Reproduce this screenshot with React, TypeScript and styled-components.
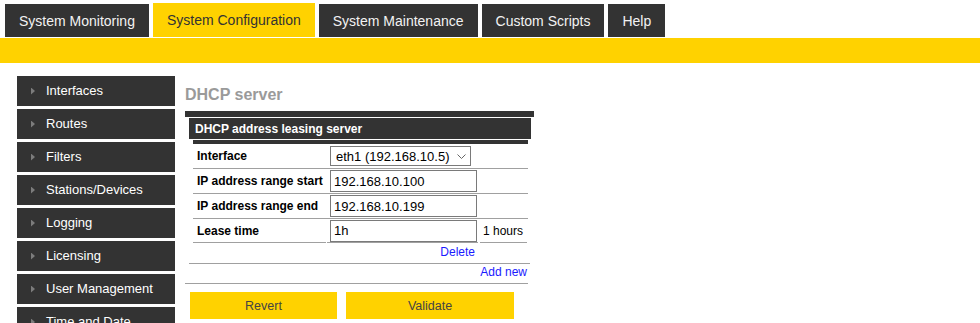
import React from "react";
import styled, { createGlobalStyle } from "styled-components";

const GlobalStyle = createGlobalStyle`
  body {
    margin: 0;
    background: #fff;
    font-family: "Liberation Sans", Arial, sans-serif;
  }
`;

const yellow = "#ffd200";
const dark = "#333333";

const TabBar = styled.nav`
  display: flex;
  align-items: flex-end;
  gap: 4px;
  padding: 3px 0 0 5px;
  height: 34px;
  margin-bottom: 1px;
`;

const Tab = styled.div<{ $active?: boolean }>`
  height: ${({ $active }) => ($active ? 34 : 33)}px;
  padding: 0 14px;
  display: flex;
  align-items: center;
  font-size: 14px;
  background: ${({ $active }) => ($active ? yellow : dark)};
  color: ${({ $active }) => ($active ? "#333" : "#f2f2f2")};
  cursor: pointer;
`;

const YellowBar = styled.div`
  height: 25px;
  background: ${yellow};
`;

const Main = styled.div`
  display: flex;
  align-items: flex-start;
`;

const Sidebar = styled.ul`
  list-style: none;
  margin: 13px 0 0 17px;
  padding: 0;
  width: 158px;
`;

const SideItem = styled.li`
  box-sizing: border-box;
  height: 30px;
  margin-bottom: 3px;
  background: ${dark};
  color: #fff;
  font-size: 13px;
  display: flex;
  align-items: center;
  padding: 0 0 2px 14px;

  &::before {
    content: "";
    width: 4px;
    height: 7px;
    background: #7c7c7c;
    clip-path: polygon(0 0, 100% 50%, 0 100%);
    margin: 2px 11px 0 0;
  }
`;

const Content = styled.section`
  margin: 23px 0 0 10px;
  display: flex;
  flex-direction: column;
`;

const Heading = styled.h2`
  margin: 0 0 7px;
  font-size: 16px;
  line-height: 18px;
  font-weight: bold;
  color: #9a9a9a;
`;

const Panel = styled.div`
  width: 349px;
  border-top: 6px solid ${dark};
  padding-top: 1px;
`;

const PanelHeader = styled.div`
  margin: 0 3px 0 4px;
  height: 21px;
  background: ${dark};
  color: #fff;
  font-size: 12px;
  font-weight: bold;
  display: flex;
  align-items: center;
  padding-left: 6px;
`;

const FormTable = styled.div`
  margin: 1px 6px 0 8px;
  border-top: 4px solid ${dark};
`;

const Row = styled.div<{ $split?: boolean }>`
  display: grid;
  grid-template-columns: 134px 153px 1fr;
  height: 24px;
  border-bottom: ${({ $split }) => ($split ? "none" : "1px solid #a0a0a0")};
  padding-bottom: ${({ $split }) => ($split ? "1px" : "0")};
`;

const Cell = styled.div<{ $split?: boolean; $gap?: number }>`
  display: flex;
  align-items: center;
  font-size: 12px;
  border-bottom: ${({ $split }) => ($split ? "1px solid #a0a0a0" : "none")};
  margin-right: ${({ $gap }) => $gap ?? 0}px;
`;

const Label = styled(Cell)`
  font-weight: bold;
  padding-left: 4px;
  color: #000;
`;

const InputCell = styled(Cell)`
  padding-left: 3px;
`;

const TextInput = styled.input`
  box-sizing: border-box;
  width: 147px;
  height: 22px;
  border: 1px solid #7a7a7a;
  padding: 0 3px;
  font-family: "Liberation Sans", Arial, sans-serif;
  font-size: 13px;
  color: #000;
  outline: none;
`;

const SelectWrap = styled.div`
  position: relative;
  width: 141px;
  height: 20px;
`;

const Select = styled.select`
  box-sizing: border-box;
  appearance: none;
  width: 100%;
  height: 100%;
  border: 1px solid #7a7a7a;
  border-radius: 0;
  background: #fff;
  padding: 0 0 0 5px;
  font-family: "Liberation Sans", Arial, sans-serif;
  font-size: 13px;
  color: #000;
`;

const Chevron = styled.svg`
  position: absolute;
  right: 5px;
  top: 8px;
  pointer-events: none;
`;

const Unit = styled(Cell)`
  padding-left: 3px;
  color: #000;
`;

const LinkRow = styled.div<{ $left: number; $right: number; $pad: number }>`
  box-sizing: border-box;
  margin: 0 ${({ $right }) => $right}px 0 ${({ $left }) => $left}px;
  height: 20px;
  border-bottom: 1px solid #a0a0a0;
  display: flex;
  align-items: flex-start;
  justify-content: flex-end;
  padding: 1px ${({ $pad }) => $pad}px 0 0;
  line-height: 15px;
`;

const Link = styled.a`
  font-size: 12px;
  color: #1a1aff;
  text-decoration: none;
  cursor: pointer;
`;

const Buttons = styled.div`
  display: flex;
  gap: 9px;
  margin: 8px 0 0 5px;
`;

const Button = styled.button<{ $width: number }>`
  width: ${({ $width }) => $width}px;
  height: 27px;
  border: none;
  background: ${yellow};
  color: #444;
  font-family: "Liberation Sans", Arial, sans-serif;
  font-size: 12.5px;
  cursor: pointer;
`;

const tabs = [
  "System Monitoring",
  "System Configuration",
  "System Maintenance",
  "Custom Scripts",
  "Help",
];

const menu = [
  "Interfaces",
  "Routes",
  "Filters",
  "Stations/Devices",
  "Logging",
  "Licensing",
  "User Management",
  "Time and Date",
];

export default function App() {
  return (
    <>
      <GlobalStyle />
      <TabBar>
        {tabs.map((t) => (
          <Tab key={t} $active={t === "System Configuration"}>
            {t}
          </Tab>
        ))}
      </TabBar>
      <YellowBar />
      <Main>
        <Sidebar>
          {menu.map((m) => (
            <SideItem key={m}>{m}</SideItem>
          ))}
        </Sidebar>
        <Content>
          <Heading>DHCP server</Heading>
          <Panel>
            <PanelHeader>DHCP address leasing server</PanelHeader>
            <FormTable>
              <Row>
                <Label>Interface</Label>
                <InputCell>
                  <SelectWrap>
                    <Select defaultValue="eth1">
                      <option value="eth1">eth1 (192.168.10.5)</option>
                    </Select>
                    <Chevron width="9" height="5" viewBox="0 0 9 5">
                      <polyline
                        points="0.5,0.5 4.5,4.5 8.5,0.5"
                        fill="none"
                        stroke="#666"
                        strokeWidth="1"
                      />
                    </Chevron>
                  </SelectWrap>
                </InputCell>
                <Cell />
              </Row>
              <Row>
                <Label>IP address range start</Label>
                <InputCell>
                  <TextInput defaultValue="192.168.10.100" />
                </InputCell>
                <Cell />
              </Row>
              <Row>
                <Label>IP address range end</Label>
                <InputCell>
                  <TextInput defaultValue="192.168.10.199" />
                </InputCell>
                <Cell />
              </Row>
              <Row $split>
                <Label $split $gap={1}>Lease time</Label>
                <InputCell $split $gap={2}>
                  <TextInput defaultValue="1h" />
                </InputCell>
                <Unit $split $gap={1}>1 hours</Unit>
              </Row>
            </FormTable>
            <LinkRow $left={4} $right={4} $pad={55}>
              <Link>Delete</Link>
            </LinkRow>
          </Panel>
          <LinkRow $left={0} $right={6} $pad={1}>
            <Link>Add new</Link>
          </LinkRow>
          <Buttons>
            <Button $width={147}>Revert</Button>
            <Button $width={168}>Validate</Button>
          </Buttons>
        </Content>
      </Main>
    </>
  );
}
